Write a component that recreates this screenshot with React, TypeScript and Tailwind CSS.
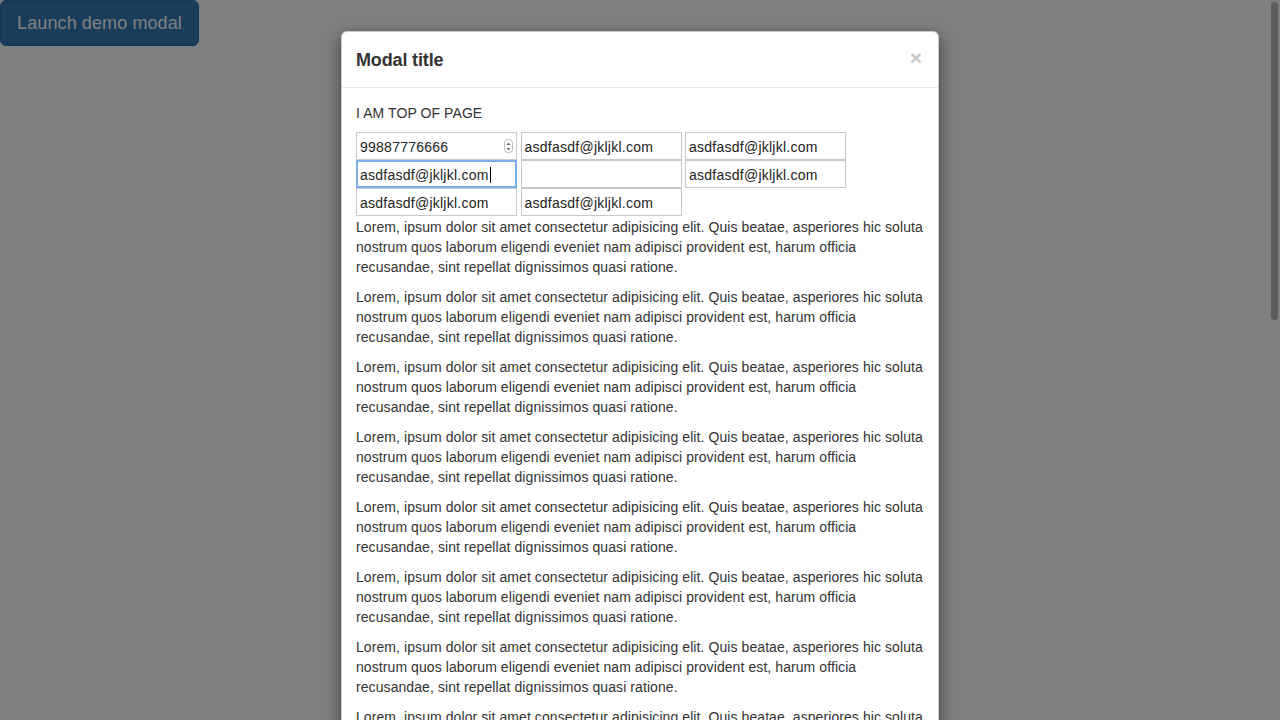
import { Fragment } from "react";

const lorem = [
  "Lorem, ipsum dolor sit amet consectetur adipisicing elit. Quis beatae, asperiores hic soluta",
  "nostrum quos laborum eligendi eveniet nam adipisci provident est, harum officia",
  "recusandae, sint repellat dignissimos quasi ratione.",
];

const fields = [
  { value: "99887776666", spin: true },
  { value: "asdfasdf@jkljkl.com" },
  { value: "asdfasdf@jkljkl.com" },
  { value: "asdfasdf@jkljkl.com", focus: true },
  { value: "" },
  { value: "asdfasdf@jkljkl.com" },
  { value: "asdfasdf@jkljkl.com" },
  { value: "asdfasdf@jkljkl.com" },
];

export default function App() {
  return (
    <div className="relative h-[720px] w-[1280px] overflow-hidden bg-white font-['Liberation_Sans',Arial,sans-serif] text-[14px] leading-[20px] tracking-[0.08px] text-[#333]">
      {/* page behind the backdrop */}
      <button className="h-[46px] w-[199px] rounded-[6px] border border-[#2e6da4] bg-[#337ab7] text-[18px] tracking-[0.1px] text-white">
        Launch demo modal
      </button>

      {/* backdrop + modal */}
      <div className="absolute inset-0 bg-black/50">
        <div className="mx-auto mt-[31px] w-[598px] rounded-[6px] border border-black/20 bg-white shadow-[0_5px_15px_rgba(0,0,0,0.5)]">
          <div className="flex items-start justify-between border-b border-[#e5e5e5] px-[14px] pt-[15px] pb-[14px]">
            <h4 className="text-[18px] font-bold leading-[26px] tracking-[-0.15px] text-[#333]">Modal title</h4>
            <span className="mt-[-2px] mr-[2px] text-[21px] font-bold leading-[26px] text-[#c8c8c8]">×</span>
          </div>

          <div className="px-[14px] pt-[15px]">
            <p>I AM TOP OF PAGE</p>
            <div className="mt-[9px] flex w-[500px] flex-wrap gap-x-[3.5px]">
              {fields.map((f, i) => (
                <Field key={i} {...f} />
              ))}
            </div>
            {Array.from({ length: 10 }).map((_, i) => (
              <p key={i} className="mt-[1px] mb-[10px] whitespace-nowrap first-of-type:mt-0">
                {lorem.map((l, j) => (
                  <Fragment key={j}>
                    {l}
                    {j < lorem.length - 1 && <br />}
                  </Fragment>
                ))}
              </p>
            ))}
          </div>
        </div>
      </div>

      {/* overlay scrollbar */}
      <div className="absolute right-[2px] top-[2px] h-[318px] w-[7px] rounded-full bg-[#5c5c5c]" />
    </div>
  );
}

function Field({ value, spin, focus }: { value: string; spin?: boolean; focus?: boolean }) {
  return (
    <div
      className={`relative flex h-[28px] w-[161px] items-center pt-[1px] text-[14px] tracking-[0.25px] text-[#222] ${
        focus ? "border-2 border-[#7aaee6] pl-[2px]" : "border border-[#c9c9c9] pl-[3px]"
      }`}
    >
      <span>{value}</span>
      {focus && <span className="ml-[1px] h-[16px] w-px bg-black" />}
      {spin && (
        <span className="absolute right-[3px] top-[6px] flex h-[14px] w-[9px] items-center justify-center rounded-[4px] border border-[#bdbdbd] bg-white">
          <svg width="5" height="9" viewBox="0 0 5 9" fill="#666">
            <path d="M2.5 0.5 L4.5 3 L0.5 3 Z" />
            <path d="M2.5 8.5 L4.5 6 L0.5 6 Z" />
          </svg>
        </span>
      )}
    </div>
  );
}
